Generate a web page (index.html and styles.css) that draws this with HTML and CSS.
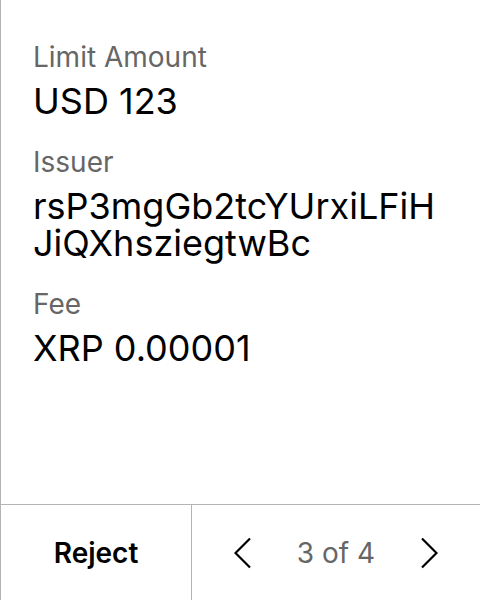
FILE: index.html
```html
<!DOCTYPE html>
<html lang="en">
<head>
<meta charset="utf-8">
<title>Transaction</title>
<link rel="stylesheet" href="styles.css">
</head>
<body>
<div class="panel">
  <div class="details">
    <div class="field">
      <div class="label">Limit Amount</div>
      <div class="value">USD 123</div>
    </div>
    <div class="field">
      <div class="label">Issuer</div>
      <div class="value">rsP3mgGb2tcYUrxiLFiH<br>JiQXhsziegtwBc</div>
    </div>
    <div class="field">
      <div class="label">Fee</div>
      <div class="value">XRP 0.00001</div>
    </div>
  </div>
  <div class="footer">
    <button class="reject">Reject</button>
    <div class="pager">
      <button class="nav" aria-label="Previous">
        <svg width="17" height="32" viewBox="0 0 17 32"><path d="M16 1.5 L1.5 16 L16 30.5" fill="none" stroke="#000" stroke-width="2.2"/></svg>
      </button>
      <span class="count">3 of 4</span>
      <button class="nav" aria-label="Next">
        <svg width="17" height="32" viewBox="0 0 17 32"><path d="M1 1.5 L15.5 16 L1 30.5" fill="none" stroke="#000" stroke-width="2.2"/></svg>
      </button>
    </div>
  </div>
</div>
</body>
</html>
```

FILE: styles.css
```css
* { box-sizing: border-box; }
html, body { margin: 0; padding: 0; background: #fff; }
body {
  font-family: Inter, "Noto Sans", sans-serif;
  color: #000;
}
.panel {
  width: 480px;
  height: 600px;
  border-left: 1px solid #b4b4b4;
  display: flex;
  flex-direction: column;
}
.details {
  flex: 1;
  padding: 40px 0 0 32px;
  display: flex;
  flex-direction: column;
  gap: 25px;
}
.field { display: flex; flex-direction: column; gap: 9px; }
.label {
  font-size: 28px;
  line-height: 34px;
  color: #666;
}
.value {
  font-size: 36px;
  line-height: 37px;
  color: #000;
}
.footer {
  height: 96px;
  border-top: 1px solid #b4b4b4;
  display: flex;
}
button {
  font-family: inherit;
  background: none;
  border: 0;
  padding: 0;
  margin: 0;
  cursor: pointer;
}
.reject {
  width: 191px;
  border-right: 1px solid #b4b4b4;
  font-size: 28px;
  font-weight: 600;
  color: #000;
}
.pager {
  flex: 1;
  display: flex;
  align-items: center;
  justify-content: center;
  gap: 46px;
}
.nav { display: flex; align-items: center; }
.count {
  font-size: 28px;
  color: #666;
}
```
